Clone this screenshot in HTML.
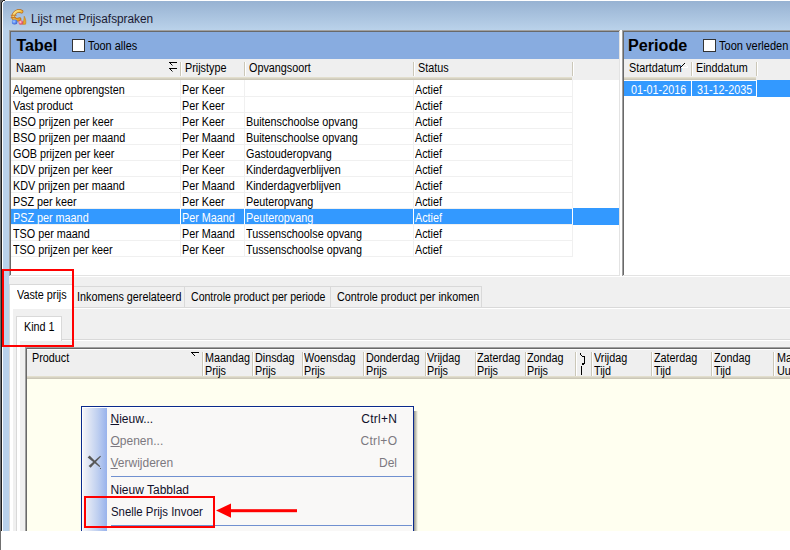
<!DOCTYPE html>
<html><head><meta charset="utf-8"><style>
html,body{margin:0;padding:0;background:#fff;}
body{width:790px;height:550px;position:relative;overflow:hidden;font-family:"Liberation Sans",sans-serif;}
div,span,svg{position:absolute;}
span{white-space:pre;}
</style></head><body>
<div style="left:0px;top:0px;width:1px;height:550px;background:#707070;"></div>
<div style="left:1px;top:0px;width:1px;height:531px;background:#1e1e1e;"></div>
<div style="left:2px;top:3px;width:1px;height:528px;background:#ffffff;"></div>
<div style="left:3px;top:1px;width:787px;height:29px;background:linear-gradient(#97b2d2,#bad2ea);"></div>
<div style="left:1px;top:0px;width:2px;height:1px;background:#707070;"></div>
<div style="left:3px;top:0px;width:2px;height:1px;background:#222222;"></div>
<div style="left:5px;top:0px;width:785px;height:1px;background:#ffffff;"></div>
<div style="left:1px;top:1px;width:1px;height:1px;background:#707070;"></div>
<div style="left:2px;top:1px;width:1px;height:1px;background:#222222;"></div>
<div style="left:3px;top:1px;width:1px;height:1px;background:#ffffff;"></div>
<div style="left:4px;top:1px;width:1px;height:1px;background:#dde6f0;"></div>
<div style="left:1px;top:2px;width:1px;height:1px;background:#222222;"></div>
<div style="left:2px;top:2px;width:1px;height:1px;background:#d0dce8;"></div>
<div style="left:3px;top:2px;width:1px;height:1px;background:#f0f4f8;"></div>
<div style="left:3px;top:30px;width:6px;height:501px;background:#b9d1ea;"></div>
<svg style="position:absolute;left:9px;top:8px" width="20" height="20" viewBox="0 0 20 20">
<defs><linearGradient id="gd" x1="0" y1="0" x2="1" y2="1"><stop offset="0" stop-color="#fff0a0"/><stop offset="0.5" stop-color="#f2c040"/><stop offset="1" stop-color="#d88a18"/></linearGradient>
<radialGradient id="bb" cx="0.4" cy="0.4" r="0.7"><stop offset="0" stop-color="#a8d0ff"/><stop offset="0.5" stop-color="#5a88f0"/><stop offset="1" stop-color="#3050b8"/></radialGradient>
<radialGradient id="rb" cx="0.4" cy="0.4" r="0.7"><stop offset="0" stop-color="#ffe0e4"/><stop offset="0.45" stop-color="#f27080"/><stop offset="1" stop-color="#c83048"/></radialGradient></defs>
<path d="M12.6 3.6 C9.5 1.8 5 3.6 4.3 8.2 C3.9 11 6.5 12.6 10.6 11.2" fill="none" stroke="#b86818" stroke-width="3.6" stroke-linecap="round"/>
<path d="M12.6 3.6 C9.5 1.8 5 3.6 4.3 8.2 C3.9 11 6.5 12.6 10.6 11.2" fill="none" stroke="url(#gd)" stroke-width="2.2" stroke-linecap="round"/>
<path d="M1.8 7.2 H7.6 M1.8 9.6 H7.2" stroke="#c8782a" stroke-width="1.1"/>
<path d="M15.2 8.2 C16.8 10.5 17.2 14 16.6 16.2 L13.6 16.4 C14.8 13.5 15 11 15.2 8.2 Z" fill="#eaa828" stroke="#b87010" stroke-width="0.5"/>
<ellipse cx="5.6" cy="14.1" rx="2.8" ry="2.5" fill="url(#bb)"/>
<circle cx="11.8" cy="14.5" r="2.3" fill="url(#rb)"/>
</svg>
<span style="left:30.5px;top:13px;font-size:12px;line-height:12px;color:#1b1a33;font-weight:normal;letter-spacing:0px;transform:scaleX(0.985);transform-origin:left top;">Lijst met Prijsafspraken</span>
<div style="left:9px;top:30px;width:612px;height:1px;background:#a0a0a0;"></div>
<div style="left:9px;top:30px;width:1px;height:247px;background:#a0a0a0;"></div>
<div style="left:10px;top:31px;width:610px;height:1px;background:#696969;"></div>
<div style="left:10px;top:31px;width:1px;height:245px;background:#696969;"></div>
<div style="left:9px;top:276px;width:612px;height:1px;background:#ffffff;"></div>
<div style="left:620px;top:30px;width:1px;height:247px;background:#ffffff;"></div>
<div style="left:10px;top:275px;width:610px;height:1px;background:#e3e3e3;"></div>
<div style="left:619px;top:31px;width:1px;height:245px;background:#e3e3e3;"></div>
<div style="left:11px;top:32px;width:608px;height:243px;background:#ffffff;"></div>
<div style="left:11px;top:32px;width:608px;height:27px;background:#88ace0;"></div>
<span style="left:16.5px;top:38px;font-size:16px;line-height:16px;color:#000;font-weight:bold;letter-spacing:0px;">Tabel</span>
<div style="left:72px;top:39px;width:13px;height:13px;background:#ffffff;border:1px solid #333333;box-sizing:border-box;"></div>
<span style="left:87.5px;top:40px;font-size:12px;line-height:12px;color:#000;font-weight:normal;letter-spacing:0px;transform:scaleX(0.91);transform-origin:left top;">Toon alles</span>
<div style="left:11px;top:59px;width:608px;height:21px;background:#efefef;"></div>
<div style="left:11px;top:77px;width:561px;height:1px;background:#e2decd;"></div>
<div style="left:11px;top:78px;width:561px;height:1px;background:#d6d2c2;"></div>
<div style="left:11px;top:79px;width:561px;height:1px;background:#cbc7b8;"></div>
<div style="left:180px;top:62px;width:1px;height:14px;background:#cbc7b8;"></div>
<div style="left:181px;top:62px;width:1px;height:14px;background:#ffffff;"></div>
<div style="left:244px;top:62px;width:1px;height:14px;background:#cbc7b8;"></div>
<div style="left:245px;top:62px;width:1px;height:14px;background:#ffffff;"></div>
<div style="left:413px;top:62px;width:1px;height:14px;background:#cbc7b8;"></div>
<div style="left:414px;top:62px;width:1px;height:14px;background:#ffffff;"></div>
<div style="left:572px;top:62px;width:1px;height:14px;background:#cbc7b8;"></div>
<div style="left:573px;top:62px;width:1px;height:14px;background:#ffffff;"></div>
<span style="left:16px;top:62px;font-size:12px;line-height:12px;color:#000;font-weight:normal;letter-spacing:0px;transform:scaleX(0.92);transform-origin:left top;">Naam</span>
<svg style="position:absolute;left:168px;top:61px" width="10" height="12" viewBox="0 0 10 12">
<path d="M1 1.5 H9 M1.5 1.5 L4.5 4.5 M1 7.5 H9 M1.5 7.5 L4.5 10.5" stroke="#000" stroke-width="1"/>
</svg>
<span style="left:184.5px;top:62px;font-size:12px;line-height:12px;color:#000;font-weight:normal;letter-spacing:0px;transform:scaleX(0.9);transform-origin:left top;">Prijstype</span>
<span style="left:249px;top:62px;font-size:12px;line-height:12px;color:#000;font-weight:normal;letter-spacing:0px;transform:scaleX(0.9);transform-origin:left top;">Opvangsoort</span>
<span style="left:418px;top:62px;font-size:12px;line-height:12px;color:#000;font-weight:normal;letter-spacing:0px;transform:scaleX(0.9);transform-origin:left top;">Status</span>
<div style="left:180px;top:80px;width:1px;height:177px;background:#f0f0f0;"></div>
<div style="left:244px;top:80px;width:1px;height:177px;background:#f0f0f0;"></div>
<div style="left:413px;top:80px;width:1px;height:177px;background:#f0f0f0;"></div>
<div style="left:572px;top:80px;width:1px;height:177px;background:#f0f0f0;"></div>
<div style="left:11px;top:96px;width:562px;height:1px;background:#f0f0f0;"></div>
<span style="left:12.5px;top:84px;font-size:12px;line-height:12px;color:#000;font-weight:normal;letter-spacing:0px;transform:scaleX(0.9);transform-origin:left top;">Algemene opbrengsten</span>
<span style="left:181.5px;top:84px;font-size:12px;line-height:12px;color:#000;font-weight:normal;letter-spacing:0px;transform:scaleX(0.9);transform-origin:left top;">Per Keer</span>
<span style="left:245.5px;top:84px;font-size:12px;line-height:12px;color:#000;font-weight:normal;letter-spacing:0px;transform:scaleX(0.9);transform-origin:left top;"></span>
<span style="left:414.5px;top:84px;font-size:12px;line-height:12px;color:#000;font-weight:normal;letter-spacing:0px;transform:scaleX(0.9);transform-origin:left top;">Actief</span>
<div style="left:11px;top:112px;width:562px;height:1px;background:#f0f0f0;"></div>
<span style="left:12.5px;top:100px;font-size:12px;line-height:12px;color:#000;font-weight:normal;letter-spacing:0px;transform:scaleX(0.9);transform-origin:left top;">Vast product</span>
<span style="left:181.5px;top:100px;font-size:12px;line-height:12px;color:#000;font-weight:normal;letter-spacing:0px;transform:scaleX(0.9);transform-origin:left top;">Per Keer</span>
<span style="left:245.5px;top:100px;font-size:12px;line-height:12px;color:#000;font-weight:normal;letter-spacing:0px;transform:scaleX(0.9);transform-origin:left top;"></span>
<span style="left:414.5px;top:100px;font-size:12px;line-height:12px;color:#000;font-weight:normal;letter-spacing:0px;transform:scaleX(0.9);transform-origin:left top;">Actief</span>
<div style="left:11px;top:128px;width:562px;height:1px;background:#f0f0f0;"></div>
<span style="left:12.5px;top:116px;font-size:12px;line-height:12px;color:#000;font-weight:normal;letter-spacing:0px;transform:scaleX(0.9);transform-origin:left top;">BSO prijzen per keer</span>
<span style="left:181.5px;top:116px;font-size:12px;line-height:12px;color:#000;font-weight:normal;letter-spacing:0px;transform:scaleX(0.9);transform-origin:left top;">Per Keer</span>
<span style="left:245.5px;top:116px;font-size:12px;line-height:12px;color:#000;font-weight:normal;letter-spacing:0px;transform:scaleX(0.9);transform-origin:left top;">Buitenschoolse opvang</span>
<span style="left:414.5px;top:116px;font-size:12px;line-height:12px;color:#000;font-weight:normal;letter-spacing:0px;transform:scaleX(0.9);transform-origin:left top;">Actief</span>
<div style="left:11px;top:144px;width:562px;height:1px;background:#f0f0f0;"></div>
<span style="left:12.5px;top:132px;font-size:12px;line-height:12px;color:#000;font-weight:normal;letter-spacing:0px;transform:scaleX(0.9);transform-origin:left top;">BSO prijzen per maand</span>
<span style="left:181.5px;top:132px;font-size:12px;line-height:12px;color:#000;font-weight:normal;letter-spacing:0px;transform:scaleX(0.9);transform-origin:left top;">Per Maand</span>
<span style="left:245.5px;top:132px;font-size:12px;line-height:12px;color:#000;font-weight:normal;letter-spacing:0px;transform:scaleX(0.9);transform-origin:left top;">Buitenschoolse opvang</span>
<span style="left:414.5px;top:132px;font-size:12px;line-height:12px;color:#000;font-weight:normal;letter-spacing:0px;transform:scaleX(0.9);transform-origin:left top;">Actief</span>
<div style="left:11px;top:160px;width:562px;height:1px;background:#f0f0f0;"></div>
<span style="left:12.5px;top:148px;font-size:12px;line-height:12px;color:#000;font-weight:normal;letter-spacing:0px;transform:scaleX(0.9);transform-origin:left top;">GOB prijzen per keer</span>
<span style="left:181.5px;top:148px;font-size:12px;line-height:12px;color:#000;font-weight:normal;letter-spacing:0px;transform:scaleX(0.9);transform-origin:left top;">Per Keer</span>
<span style="left:245.5px;top:148px;font-size:12px;line-height:12px;color:#000;font-weight:normal;letter-spacing:0px;transform:scaleX(0.9);transform-origin:left top;">Gastouderopvang</span>
<span style="left:414.5px;top:148px;font-size:12px;line-height:12px;color:#000;font-weight:normal;letter-spacing:0px;transform:scaleX(0.9);transform-origin:left top;">Actief</span>
<div style="left:11px;top:176px;width:562px;height:1px;background:#f0f0f0;"></div>
<span style="left:12.5px;top:164px;font-size:12px;line-height:12px;color:#000;font-weight:normal;letter-spacing:0px;transform:scaleX(0.9);transform-origin:left top;">KDV prijzen per keer</span>
<span style="left:181.5px;top:164px;font-size:12px;line-height:12px;color:#000;font-weight:normal;letter-spacing:0px;transform:scaleX(0.9);transform-origin:left top;">Per Keer</span>
<span style="left:245.5px;top:164px;font-size:12px;line-height:12px;color:#000;font-weight:normal;letter-spacing:0px;transform:scaleX(0.9);transform-origin:left top;">Kinderdagverblijven</span>
<span style="left:414.5px;top:164px;font-size:12px;line-height:12px;color:#000;font-weight:normal;letter-spacing:0px;transform:scaleX(0.9);transform-origin:left top;">Actief</span>
<div style="left:11px;top:192px;width:562px;height:1px;background:#f0f0f0;"></div>
<span style="left:12.5px;top:180px;font-size:12px;line-height:12px;color:#000;font-weight:normal;letter-spacing:0px;transform:scaleX(0.9);transform-origin:left top;">KDV prijzen per maand</span>
<span style="left:181.5px;top:180px;font-size:12px;line-height:12px;color:#000;font-weight:normal;letter-spacing:0px;transform:scaleX(0.9);transform-origin:left top;">Per Maand</span>
<span style="left:245.5px;top:180px;font-size:12px;line-height:12px;color:#000;font-weight:normal;letter-spacing:0px;transform:scaleX(0.9);transform-origin:left top;">Kinderdagverblijven</span>
<span style="left:414.5px;top:180px;font-size:12px;line-height:12px;color:#000;font-weight:normal;letter-spacing:0px;transform:scaleX(0.9);transform-origin:left top;">Actief</span>
<div style="left:11px;top:208px;width:562px;height:1px;background:#f0f0f0;"></div>
<span style="left:12.5px;top:196px;font-size:12px;line-height:12px;color:#000;font-weight:normal;letter-spacing:0px;transform:scaleX(0.9);transform-origin:left top;">PSZ per keer</span>
<span style="left:181.5px;top:196px;font-size:12px;line-height:12px;color:#000;font-weight:normal;letter-spacing:0px;transform:scaleX(0.9);transform-origin:left top;">Per Keer</span>
<span style="left:245.5px;top:196px;font-size:12px;line-height:12px;color:#000;font-weight:normal;letter-spacing:0px;transform:scaleX(0.9);transform-origin:left top;">Peuteropvang</span>
<span style="left:414.5px;top:196px;font-size:12px;line-height:12px;color:#000;font-weight:normal;letter-spacing:0px;transform:scaleX(0.9);transform-origin:left top;">Actief</span>
<div style="left:11px;top:209px;width:561px;height:15px;background:#3399ff;"></div>
<div style="left:573px;top:208px;width:46px;height:17px;background:#3399ff;"></div>
<div style="left:180px;top:208px;width:1px;height:17px;background:#ffffff;"></div>
<div style="left:244px;top:208px;width:1px;height:17px;background:#ffffff;"></div>
<div style="left:413px;top:208px;width:1px;height:17px;background:#ffffff;"></div>
<div style="left:572px;top:208px;width:1px;height:17px;background:#ffffff;"></div>
<div style="left:11px;top:224px;width:562px;height:1px;background:#f0f0f0;"></div>
<span style="left:12.5px;top:212px;font-size:12px;line-height:12px;color:#ffffff;font-weight:normal;letter-spacing:0px;transform:scaleX(0.9);transform-origin:left top;">PSZ per maand</span>
<span style="left:181.5px;top:212px;font-size:12px;line-height:12px;color:#ffffff;font-weight:normal;letter-spacing:0px;transform:scaleX(0.9);transform-origin:left top;">Per Maand</span>
<span style="left:245.5px;top:212px;font-size:12px;line-height:12px;color:#ffffff;font-weight:normal;letter-spacing:0px;transform:scaleX(0.9);transform-origin:left top;">Peuteropvang</span>
<span style="left:414.5px;top:212px;font-size:12px;line-height:12px;color:#ffffff;font-weight:normal;letter-spacing:0px;transform:scaleX(0.9);transform-origin:left top;">Actief</span>
<div style="left:11px;top:240px;width:562px;height:1px;background:#f0f0f0;"></div>
<span style="left:12.5px;top:228px;font-size:12px;line-height:12px;color:#000;font-weight:normal;letter-spacing:0px;transform:scaleX(0.9);transform-origin:left top;">TSO per maand</span>
<span style="left:181.5px;top:228px;font-size:12px;line-height:12px;color:#000;font-weight:normal;letter-spacing:0px;transform:scaleX(0.9);transform-origin:left top;">Per Maand</span>
<span style="left:245.5px;top:228px;font-size:12px;line-height:12px;color:#000;font-weight:normal;letter-spacing:0px;transform:scaleX(0.9);transform-origin:left top;">Tussenschoolse opvang</span>
<span style="left:414.5px;top:228px;font-size:12px;line-height:12px;color:#000;font-weight:normal;letter-spacing:0px;transform:scaleX(0.9);transform-origin:left top;">Actief</span>
<div style="left:11px;top:256px;width:562px;height:1px;background:#f0f0f0;"></div>
<span style="left:12.5px;top:244px;font-size:12px;line-height:12px;color:#000;font-weight:normal;letter-spacing:0px;transform:scaleX(0.9);transform-origin:left top;">TSO prijzen per keer</span>
<span style="left:181.5px;top:244px;font-size:12px;line-height:12px;color:#000;font-weight:normal;letter-spacing:0px;transform:scaleX(0.9);transform-origin:left top;">Per Keer</span>
<span style="left:245.5px;top:244px;font-size:12px;line-height:12px;color:#000;font-weight:normal;letter-spacing:0px;transform:scaleX(0.9);transform-origin:left top;">Tussenschoolse opvang</span>
<span style="left:414.5px;top:244px;font-size:12px;line-height:12px;color:#000;font-weight:normal;letter-spacing:0px;transform:scaleX(0.9);transform-origin:left top;">Actief</span>
<div style="left:622px;top:30px;width:200px;height:1px;background:#a0a0a0;"></div>
<div style="left:622px;top:30px;width:1px;height:247px;background:#a0a0a0;"></div>
<div style="left:623px;top:31px;width:198px;height:1px;background:#696969;"></div>
<div style="left:623px;top:31px;width:1px;height:245px;background:#696969;"></div>
<div style="left:622px;top:276px;width:200px;height:1px;background:#ffffff;"></div>
<div style="left:821px;top:30px;width:1px;height:247px;background:#ffffff;"></div>
<div style="left:623px;top:275px;width:198px;height:1px;background:#e3e3e3;"></div>
<div style="left:820px;top:31px;width:1px;height:245px;background:#e3e3e3;"></div>
<div style="left:624px;top:32px;width:166px;height:243px;background:#ffffff;"></div>
<div style="left:624px;top:32px;width:166px;height:27px;background:#88ace0;"></div>
<span style="left:628px;top:38px;font-size:16px;line-height:16px;color:#000;font-weight:bold;letter-spacing:0px;transform:scaleX(1.01);transform-origin:left top;">Periode</span>
<div style="left:703px;top:39px;width:13px;height:13px;background:#ffffff;border:1px solid #333333;box-sizing:border-box;"></div>
<span style="left:718.5px;top:40px;font-size:12px;line-height:12px;color:#000;font-weight:normal;letter-spacing:0px;transform:scaleX(0.92);transform-origin:left top;">Toon verleden</span>
<div style="left:624px;top:59px;width:166px;height:21px;background:#efefef;"></div>
<div style="left:624px;top:77px;width:132px;height:1px;background:#e2decd;"></div>
<div style="left:624px;top:78px;width:132px;height:1px;background:#d6d2c2;"></div>
<div style="left:624px;top:79px;width:132px;height:1px;background:#cbc7b8;"></div>
<div style="left:691px;top:62px;width:1px;height:14px;background:#cbc7b8;"></div>
<div style="left:692px;top:62px;width:1px;height:14px;background:#ffffff;"></div>
<div style="left:756px;top:62px;width:1px;height:14px;background:#cbc7b8;"></div>
<div style="left:757px;top:62px;width:1px;height:14px;background:#ffffff;"></div>
<span style="left:629px;top:62px;font-size:12px;line-height:12px;color:#000;font-weight:normal;letter-spacing:0px;transform:scaleX(0.9);transform-origin:left top;">Startdatum</span>
<div style="left:680px;top:67px;width:1px;height:1px;background:#000;"></div>
<div style="left:681px;top:66px;width:1px;height:1px;background:#000;"></div>
<div style="left:682px;top:65px;width:1px;height:1px;background:#000;"></div>
<div style="left:683px;top:64px;width:1px;height:1px;background:#000;"></div>
<div style="left:684px;top:63px;width:1px;height:1px;background:#000;"></div>
<div style="left:685px;top:64px;width:1px;height:1px;background:#fff;"></div>
<div style="left:686px;top:65px;width:1px;height:1px;background:#fff;"></div>
<div style="left:687px;top:66px;width:1px;height:1px;background:#fff;"></div>
<div style="left:681px;top:67px;width:7px;height:1px;background:#fff;"></div>
<span style="left:695.5px;top:62px;font-size:12px;line-height:12px;color:#000;font-weight:normal;letter-spacing:0px;transform:scaleX(0.9);transform-origin:left top;">Einddatum</span>
<div style="left:624px;top:81px;width:132px;height:15px;background:#3399ff;"></div>
<div style="left:757px;top:80px;width:33px;height:17px;background:#3399ff;"></div>
<div style="left:691px;top:80px;width:1px;height:17px;background:#ffffff;"></div>
<span style="left:631px;top:84px;font-size:12px;line-height:12px;color:#fff;font-weight:normal;letter-spacing:0px;transform:scaleX(0.9);transform-origin:left top;">01-01-2016</span>
<span style="left:697px;top:84px;font-size:12px;line-height:12px;color:#fff;font-weight:normal;letter-spacing:0px;transform:scaleX(0.9);transform-origin:left top;">31-12-2035</span>
<div style="left:756px;top:80px;width:1px;height:17px;background:#ffffff;"></div>
<div style="left:9px;top:277px;width:781px;height:254px;background:#f0f0f0;"></div>
<div style="left:72px;top:286px;width:113px;height:22px;background:#f0f0f0;border:1px solid #d9d9d9;box-sizing:border-box;"></div>
<span style="left:76.5px;top:291px;font-size:12px;line-height:12px;color:#000;font-weight:normal;letter-spacing:0px;transform:scaleX(0.9);transform-origin:left top;">Inkomens gerelateerd</span>
<div style="left:184px;top:286px;width:147px;height:22px;background:#f0f0f0;border:1px solid #d9d9d9;box-sizing:border-box;"></div>
<span style="left:191px;top:291px;font-size:12px;line-height:12px;color:#000;font-weight:normal;letter-spacing:0px;transform:scaleX(0.88);transform-origin:left top;">Controle product per periode</span>
<div style="left:330px;top:286px;width:152px;height:22px;background:#f0f0f0;border:1px solid #d9d9d9;box-sizing:border-box;"></div>
<span style="left:337px;top:291px;font-size:12px;line-height:12px;color:#000;font-weight:normal;letter-spacing:0px;transform:scaleX(0.9);transform-origin:left top;">Controle product per inkomen</span>
<div style="left:9px;top:307px;width:781px;height:1px;background:#d9d9d9;"></div>
<div style="left:9px;top:308px;width:781px;height:223px;background:#ffffff;"></div>
<div style="left:9px;top:307px;width:1px;height:224px;background:#d9d9d9;"></div>
<div style="left:9px;top:284px;width:64px;height:25px;background:#ffffff;border:1px solid #d9d9d9;border-bottom:none;box-sizing:border-box;"></div>
<span style="left:16.5px;top:289px;font-size:12px;line-height:12px;color:#000;font-weight:normal;letter-spacing:0px;transform:scaleX(0.9);transform-origin:left top;">Vaste prijs</span>
<div style="left:13px;top:309px;width:777px;height:222px;background:#f0f0f0;"></div>
<div style="left:16px;top:339px;width:774px;height:192px;background:#ffffff;"></div>
<div style="left:16px;top:339px;width:774px;height:1px;background:#d9d9d9;"></div>
<div style="left:16px;top:339px;width:1px;height:192px;background:#d9d9d9;"></div>
<div style="left:20px;top:341px;width:770px;height:190px;background:#f0f0f0;"></div>
<div style="left:16px;top:316px;width:46px;height:25px;background:#ffffff;border:1px solid #d9d9d9;border-bottom:none;box-sizing:border-box;"></div>
<span style="left:24px;top:321px;font-size:12px;line-height:12px;color:#000;font-weight:normal;letter-spacing:0px;transform:scaleX(0.9);transform-origin:left top;">Kind 1</span>
<div style="left:25px;top:347px;width:765px;height:1px;background:#a0a0a0;"></div>
<div style="left:25px;top:347px;width:1px;height:184px;background:#a0a0a0;"></div>
<div style="left:26px;top:348px;width:764px;height:1px;background:#696969;"></div>
<div style="left:26px;top:348px;width:1px;height:183px;background:#696969;"></div>
<div style="left:27px;top:349px;width:763px;height:30px;background:#efefef;"></div>
<div style="left:27px;top:349px;width:763px;height:1px;background:#ffffff;"></div>
<div style="left:27px;top:376px;width:763px;height:1px;background:#e2decd;"></div>
<div style="left:27px;top:377px;width:763px;height:1px;background:#d6d2c2;"></div>
<div style="left:27px;top:378px;width:763px;height:1px;background:#cbc7b8;"></div>
<div style="left:27px;top:379px;width:763px;height:152px;background:#fffff0;"></div>
<div style="left:202px;top:352px;width:1px;height:24px;background:#cbc7b8;"></div>
<div style="left:203px;top:352px;width:1px;height:24px;background:#ffffff;"></div>
<div style="left:252px;top:352px;width:1px;height:24px;background:#cbc7b8;"></div>
<div style="left:253px;top:352px;width:1px;height:24px;background:#ffffff;"></div>
<div style="left:302px;top:352px;width:1px;height:24px;background:#cbc7b8;"></div>
<div style="left:303px;top:352px;width:1px;height:24px;background:#ffffff;"></div>
<div style="left:363px;top:352px;width:1px;height:24px;background:#cbc7b8;"></div>
<div style="left:364px;top:352px;width:1px;height:24px;background:#ffffff;"></div>
<div style="left:425px;top:352px;width:1px;height:24px;background:#cbc7b8;"></div>
<div style="left:426px;top:352px;width:1px;height:24px;background:#ffffff;"></div>
<div style="left:475px;top:352px;width:1px;height:24px;background:#cbc7b8;"></div>
<div style="left:476px;top:352px;width:1px;height:24px;background:#ffffff;"></div>
<div style="left:525px;top:352px;width:1px;height:24px;background:#cbc7b8;"></div>
<div style="left:526px;top:352px;width:1px;height:24px;background:#ffffff;"></div>
<div style="left:575px;top:352px;width:1px;height:24px;background:#cbc7b8;"></div>
<div style="left:576px;top:352px;width:1px;height:24px;background:#ffffff;"></div>
<div style="left:591px;top:352px;width:1px;height:24px;background:#cbc7b8;"></div>
<div style="left:592px;top:352px;width:1px;height:24px;background:#ffffff;"></div>
<div style="left:651px;top:352px;width:1px;height:24px;background:#cbc7b8;"></div>
<div style="left:652px;top:352px;width:1px;height:24px;background:#ffffff;"></div>
<div style="left:711px;top:352px;width:1px;height:24px;background:#cbc7b8;"></div>
<div style="left:712px;top:352px;width:1px;height:24px;background:#ffffff;"></div>
<div style="left:773px;top:352px;width:1px;height:24px;background:#cbc7b8;"></div>
<div style="left:774px;top:352px;width:1px;height:24px;background:#ffffff;"></div>
<span style="left:32px;top:352px;font-size:12px;line-height:12px;color:#000;font-weight:normal;letter-spacing:0px;transform:scaleX(0.9);transform-origin:left top;">Product</span>
<div style="left:191px;top:352px;width:8px;height:1px;background:#000;"></div>
<div style="left:192px;top:353px;width:1px;height:1px;background:#000;"></div>
<div style="left:193px;top:354px;width:1px;height:1px;background:#000;"></div>
<div style="left:194px;top:355px;width:1px;height:1px;background:#000;"></div>
<div style="left:195px;top:354px;width:1px;height:1px;background:#fff;"></div>
<div style="left:196px;top:353px;width:2px;height:1px;background:#fff;"></div>
<span style="left:204.5px;top:352px;font-size:12px;line-height:12px;color:#000;font-weight:normal;letter-spacing:0px;transform:scaleX(0.9);transform-origin:left top;">Maandag</span>
<span style="left:204.5px;top:365px;font-size:12px;line-height:12px;color:#000;font-weight:normal;letter-spacing:0px;transform:scaleX(0.9);transform-origin:left top;">Prijs</span>
<span style="left:254.5px;top:352px;font-size:12px;line-height:12px;color:#000;font-weight:normal;letter-spacing:0px;transform:scaleX(0.9);transform-origin:left top;">Dinsdag</span>
<span style="left:254.5px;top:365px;font-size:12px;line-height:12px;color:#000;font-weight:normal;letter-spacing:0px;transform:scaleX(0.9);transform-origin:left top;">Prijs</span>
<span style="left:304px;top:352px;font-size:12px;line-height:12px;color:#000;font-weight:normal;letter-spacing:0px;transform:scaleX(0.9);transform-origin:left top;">Woensdag</span>
<span style="left:304px;top:365px;font-size:12px;line-height:12px;color:#000;font-weight:normal;letter-spacing:0px;transform:scaleX(0.9);transform-origin:left top;">Prijs</span>
<span style="left:365.5px;top:352px;font-size:12px;line-height:12px;color:#000;font-weight:normal;letter-spacing:0px;transform:scaleX(0.9);transform-origin:left top;">Donderdag</span>
<span style="left:365.5px;top:365px;font-size:12px;line-height:12px;color:#000;font-weight:normal;letter-spacing:0px;transform:scaleX(0.9);transform-origin:left top;">Prijs</span>
<span style="left:427px;top:352px;font-size:12px;line-height:12px;color:#000;font-weight:normal;letter-spacing:0px;transform:scaleX(0.9);transform-origin:left top;">Vrijdag</span>
<span style="left:427px;top:365px;font-size:12px;line-height:12px;color:#000;font-weight:normal;letter-spacing:0px;transform:scaleX(0.9);transform-origin:left top;">Prijs</span>
<span style="left:476.5px;top:352px;font-size:12px;line-height:12px;color:#000;font-weight:normal;letter-spacing:0px;transform:scaleX(0.9);transform-origin:left top;">Zaterdag</span>
<span style="left:476.5px;top:365px;font-size:12px;line-height:12px;color:#000;font-weight:normal;letter-spacing:0px;transform:scaleX(0.9);transform-origin:left top;">Prijs</span>
<span style="left:527px;top:352px;font-size:12px;line-height:12px;color:#000;font-weight:normal;letter-spacing:0px;transform:scaleX(0.9);transform-origin:left top;">Zondag</span>
<span style="left:527px;top:365px;font-size:12px;line-height:12px;color:#000;font-weight:normal;letter-spacing:0px;transform:scaleX(0.9);transform-origin:left top;">Prijs</span>
<span style="left:593.5px;top:352px;font-size:12px;line-height:12px;color:#000;font-weight:normal;letter-spacing:0px;transform:scaleX(0.9);transform-origin:left top;">Vrijdag</span>
<span style="left:593.5px;top:365px;font-size:12px;line-height:12px;color:#000;font-weight:normal;letter-spacing:0px;transform:scaleX(0.9);transform-origin:left top;">Tijd</span>
<span style="left:653.5px;top:352px;font-size:12px;line-height:12px;color:#000;font-weight:normal;letter-spacing:0px;transform:scaleX(0.9);transform-origin:left top;">Zaterdag</span>
<span style="left:653.5px;top:365px;font-size:12px;line-height:12px;color:#000;font-weight:normal;letter-spacing:0px;transform:scaleX(0.9);transform-origin:left top;">Tijd</span>
<span style="left:713.5px;top:352px;font-size:12px;line-height:12px;color:#000;font-weight:normal;letter-spacing:0px;transform:scaleX(0.9);transform-origin:left top;">Zondag</span>
<span style="left:713.5px;top:365px;font-size:12px;line-height:12px;color:#000;font-weight:normal;letter-spacing:0px;transform:scaleX(0.9);transform-origin:left top;">Tijd</span>
<span style="left:777px;top:352px;font-size:12px;line-height:12px;color:#000;font-weight:normal;letter-spacing:0px;transform:scaleX(0.9);transform-origin:left top;">Ma</span>
<span style="left:777px;top:365px;font-size:12px;line-height:12px;color:#000;font-weight:normal;letter-spacing:0px;transform:scaleX(0.9);transform-origin:left top;">Uu</span>
<div style="left:580px;top:353px;width:1px;height:2px;background:#000;"></div>
<div style="left:581px;top:355px;width:1px;height:1px;background:#000;"></div>
<div style="left:582px;top:356px;width:2px;height:1px;background:#000;"></div>
<div style="left:584px;top:356px;width:1px;height:7px;background:#000;"></div>
<div style="left:582px;top:363px;width:3px;height:1px;background:#000;"></div>
<div style="left:582px;top:364px;width:2px;height:1px;background:#000;"></div>
<div style="left:581px;top:366px;width:1px;height:9px;background:#000;"></div>
<div style="left:414px;top:411px;width:4px;height:120px;background:linear-gradient(90deg,rgba(0,0,0,0.42),rgba(0,0,0,0));"></div>
<div style="left:81px;top:406px;width:333px;height:125px;background:#f9f8f7;border:1px solid #0a2a8c;border-bottom:none;box-sizing:border-box;"></div>
<div style="left:82px;top:407px;width:330px;height:1px;background:#ffffff;"></div>
<div style="left:82px;top:407px;width:1px;height:124px;background:#ffffff;"></div>
<div style="left:83px;top:408px;width:24px;height:123px;background:linear-gradient(90deg,#f4f4f7,#c0d0f0 60%,#98b2ec);"></div>
<span style="left:110.5px;top:413px;font-size:12px;line-height:12px;color:#10102a;font-weight:normal;letter-spacing:0px;"><u>N</u>ieuw...</span>
<span style="right:392.7px;top:413px;font-size:12px;line-height:12px;color:#10102a;font-weight:normal;letter-spacing:0.3px;">Ctrl+N</span>
<span style="left:110.5px;top:435px;font-size:12px;line-height:12px;color:#7c7880;font-weight:normal;letter-spacing:0px;"><u>O</u>penen...</span>
<span style="right:392.7px;top:435px;font-size:12px;line-height:12px;color:#7c7880;font-weight:normal;letter-spacing:0.3px;">Ctrl+O</span>
<span style="left:110.5px;top:457px;font-size:12px;line-height:12px;color:#7c7880;font-weight:normal;letter-spacing:0px;"><u>V</u>erwijderen</span>
<span style="right:393px;top:457px;font-size:12px;line-height:12px;color:#7c7880;font-weight:normal;letter-spacing:0px;">Del</span>
<svg style="position:absolute;left:84px;top:452px" width="22" height="20" viewBox="0 0 22 20"><polygon points="3.6,5.4 5.6,3.6 16.3,14.2 15.5,15" fill="#585858"/><polygon points="16.2,3.8 17,4.6 6.6,15.8 4.6,14" fill="#585858"/><rect x="16" y="16" width="1" height="1" fill="#606060"/></svg>
<div style="left:111px;top:476px;width:301px;height:1px;background:#7090d0;"></div>
<span style="left:110.5px;top:484px;font-size:12px;line-height:12px;color:#10102a;font-weight:normal;letter-spacing:0px;">Nieuw Tabblad</span>
<span style="left:110.5px;top:506px;font-size:12px;line-height:12px;color:#10102a;font-weight:normal;letter-spacing:0px;transform:scaleX(0.95);transform-origin:left top;">Snelle Prijs Invoer</span>
<div style="left:111px;top:525px;width:301px;height:1px;background:#7090d0;"></div>
<div style="left:2px;top:269px;width:72px;height:78px;background:transparent;border:2px solid #ff0000;box-sizing:border-box;"></div>
<div style="left:84px;top:496px;width:131px;height:32px;background:transparent;border:2px solid #ff0000;box-sizing:border-box;"></div>
<svg style="position:absolute;left:214px;top:501px" width="86" height="20" viewBox="0 0 86 20"><path d="M2 9.6 L17 2.5 L17 16.8 Z" fill="#ff0000"/><rect x="16" y="8.2" width="67" height="3" fill="#ff0000"/></svg>
</body></html>
